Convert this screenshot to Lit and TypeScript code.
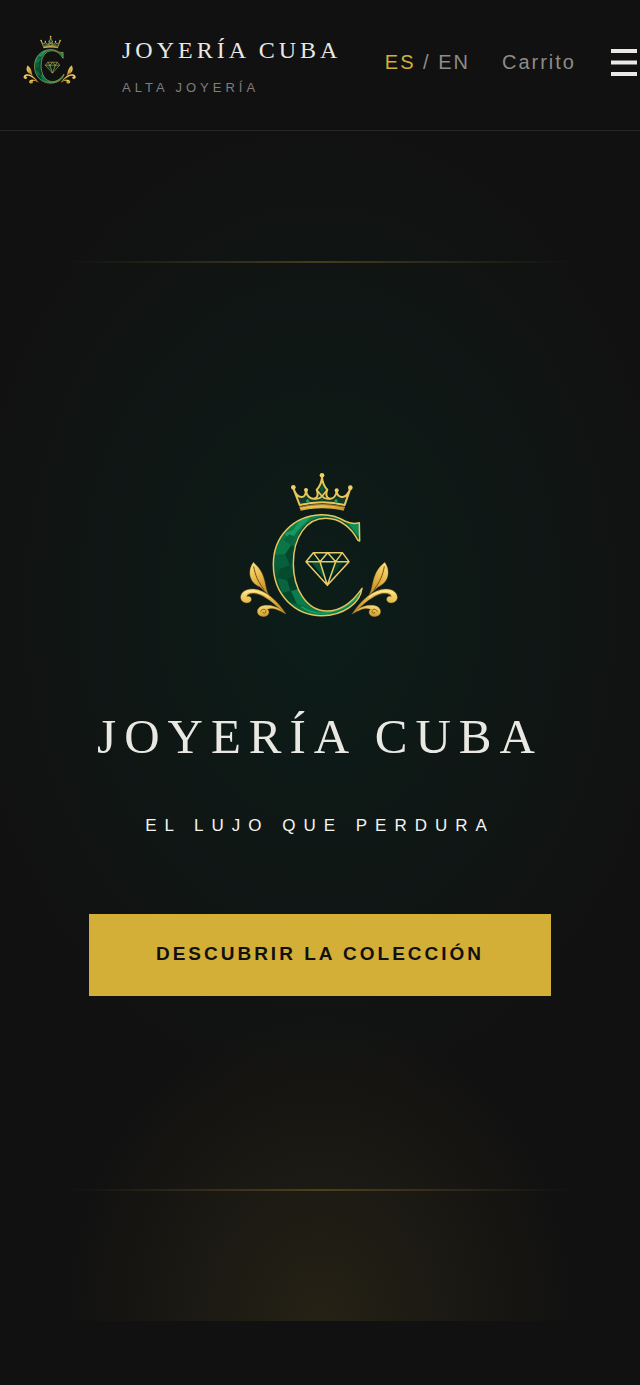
import { LitElement, html, css, svg } from "lit";
import { customElement } from "lit/decorators.js";

const CRESCENT =
  "M388 173 C374 177 358 175 344 168 C322 154 298 148 272 149 C190 152 130 215 130 298 C130 390 195 452 275 452 C340 452 390 415 396 370 C370 408 335 438 290 438 C228 436 190 370 190 296 C190 215 230 160 287 160 C330 160 365 188 383 225 L389 228 Z";

@customElement("brand-emblem")
class BrandEmblem extends LitElement {
  static styles = css`
    :host {
      display: block;
    }
    .emblem {
      display: block;
      width: 100%;
      height: auto;
    }
  `;

  private flourish() {
    return svg`
      <path d="M70 292 C52 316 56 352 90 366 L117 390 C102 368 112 326 70 292 Z"
        fill="url(#gold)" stroke="#9a6a1e" stroke-width="1"/>
      <path d="M71 304 C76 332 84 350 102 374" fill="none" stroke="#7a4d12" stroke-width="3"/>
      <path d="M168 447 C140 405 104 372 66 372 C44 372 31 385 32 399 C34 414 56 419 63 407 C67 398 58 391 50 395 C52 384 72 381 90 389 C118 401 140 424 168 447 Z"
        fill="url(#gold)" stroke="#9a6a1e" stroke-width="1"/>
      <path d="M42 386 C56 374 90 376 118 397" fill="none" stroke="#fff0a0" stroke-width="3"/>
      <path d="M52 390 C66 382 84 386 104 396" fill="none" stroke="#7a4d12" stroke-width="2"/>
      <path d="M166 446 C146 424 124 420 104 421 C88 423 79 434 83 445 C88 458 111 458 116 446 C118 440 116 436 112 433 C122 430 130 430 138 433 C148 437 157 441 166 446 Z"
        fill="url(#gold)" stroke="#9a6a1e" stroke-width="1"/>
      <path d="M92 440 C94 431 108 430 108 439 C108 446 99 446 99 441" fill="none" stroke="#7a4d12" stroke-width="2.5"/>`;
  }

  render() {
    return html`
      <svg class="emblem" viewBox="0 0 540 480" aria-hidden="true">
        <defs>
          <linearGradient id="gold" x1="0" y1="0" x2="0.4" y2="1">
            <stop offset="0" stop-color="#fbe68a" />
            <stop offset="0.5" stop-color="#e8bd4c" />
            <stop offset="1" stop-color="#c8922c" />
          </linearGradient>
          <linearGradient id="green" x1="0" y1="0" x2="0.35" y2="1">
            <stop offset="0" stop-color="#129459" />
            <stop offset="0.35" stop-color="#08663e" />
            <stop offset="0.7" stop-color="#05482c" />
            <stop offset="1" stop-color="#0a7d4b" />
          </linearGradient>
          <clipPath id="crescent"><path d=${CRESCENT} /></clipPath>
        </defs>

        <path d=${CRESCENT} fill="url(#green)" />
        <g clip-path="url(#crescent)">
          <path d="M164 205 L188 196 L210 166 L250 148 L200 200 L180 230 Z" fill="#20b073" opacity="0.6" />
          <path d="M130 245 L160 225 L184 240 L166 268 L136 270 Z" fill="#0b7648" />
          <path d="M160 225 L178 208 L196 215 L184 240 Z" fill="#086540" />
          <path d="M136 270 L166 268 L180 300 L150 312 L128 300 Z" fill="#085f3b" />
          <path d="M166 268 L184 240 L200 250 L190 300 L180 300 Z" fill="#04462b" />
          <path d="M150 312 L180 300 L190 330 L172 346 L142 340 Z" fill="#054c2e" />
          <path d="M142 340 L172 346 L182 378 L156 384 Z" fill="#086540" />
          <path d="M172 346 L190 330 L212 384 L182 378 Z" fill="#043f28" />
          <path d="M182 378 L206 372 L236 426 L200 416 Z" fill="#0a7b4b" />
          <path d="M156 384 L182 378 L200 416 L178 412 Z" fill="#04482c" />
          <path d="M196 240 C204 190 240 156 290 154 L350 172 L340 190 L290 164 L220 200 Z" fill="#043b26" opacity="0.7" />
          <path d="M215 425 C260 458 330 450 385 394" fill="none" stroke="#17a566" stroke-width="4" />
          <path d="M356 176 L388 176 L386 216 Z" fill="#0f8f58" />
        </g>
        <path d=${CRESCENT} fill="none" stroke="#e6c45e" stroke-width="4.5" stroke-linejoin="round" />

        <path d="M250 263 H337 L357 290 L292 361 L228 290 Z" fill="#04211a" />
        <path d="M244 292 H270 L286 344 Z" fill="#075237" />
        <path d="M317 292 H340 L302 336 Z" fill="#053a28" />
        <path
          d="M250 263 H337 L357 290 L292 361 L228 290 Z M228 290 H357 M250 263 L270 290 L293 263 L317 290 L337 263 M270 290 L292 361 L317 290"
          fill="none"
          stroke="#e9c96a"
          stroke-width="4.5"
          stroke-linejoin="round"
        />

        <path
          d="M190 70 L209 120 Q277 104 344 120 L361 71 C353 90 343 98 334 96 C324 94 321 88 320 78 C318 92 310 102 300 101 C289 99 286 88 292 74 C283 66 278 54 276 38 C274 54 269 66 260 74 C266 88 263 99 252 101 C240 102 230 92 228 78 C227 88 224 95 216 96 C207 97 197 88 190 70 Z"
          fill="#123a28"
          stroke="#eac659"
          stroke-width="6"
          stroke-linejoin="round"
        />
        <path
          d="M260 74 L276 94 L292 74 M252 101 Q266 104 276 94 Q286 104 300 101"
          fill="none"
          stroke="#eac659"
          stroke-width="5"
          stroke-linejoin="round"
        />
        <path d="M276 60 L282 72 L276 82 L270 72 Z M276 98 L281 104 L276 110 L271 104 Z" fill="#0a5c3c" />
        <path d="M233 101 L239 108 L233 114 L227 108 Z M318 101 L324 108 L318 114 L312 108 Z" fill="#16a268" />
        <path d="M208 125 Q277 109 345 125 L341 137 Q277 123 212 137 Z" fill="url(#gold)" />
        <path d="M211 126 Q277 112 342 126" fill="none" stroke="#5c3c0c" stroke-width="2" />
        <g fill="#f0cf68">
          <circle cx="190" cy="67" r="7" />
          <circle cx="228" cy="75" r="6" />
          <circle cx="276" cy="31" r="7" />
          <circle cx="320" cy="76" r="6" />
          <circle cx="361" cy="68" r="7" />
        </g>

        <g>${this.flourish()}</g>
        <g transform="translate(534 0) scale(-1 1)">${this.flourish()}</g>
      </svg>
    `;
  }
}

@customElement("app-root")
class AppRoot extends LitElement {
  static styles = css`
    :host {
      display: block;
      min-height: 100vh;
      background: #111111;
      color: #eae8e2;
      font-family: "Liberation Sans", Arial, sans-serif;
    }
    .header {
      display: flex;
      align-items: center;
      justify-content: space-between;
      height: 130px;
      padding-left: 20px;
      border-bottom: 1px solid #262626;
    }
    .brand {
      display: flex;
      align-items: center;
      gap: 42px;
      color: inherit;
      text-decoration: none;
    }
    .brand-mark {
      width: 60px;
      padding-bottom: 10px;
    }
    .brand-text {
      display: flex;
      flex-direction: column;
      gap: 10px;
      padding-top: 4px;
      white-space: nowrap;
    }
    .brand-name {
      font: 24px/32px "Liberation Serif", "Times New Roman", serif;
      letter-spacing: 4px;
    }
    .brand-sub {
      font-size: 13px;
      line-height: 24px;
      letter-spacing: 4px;
      color: #807e7b;
    }
    .nav {
      display: flex;
      align-items: center;
      gap: 32px;
      padding-bottom: 6px;
      font-size: 20px;
      line-height: 24px;
      letter-spacing: 2px;
      color: #8e8c89;
      white-space: nowrap;
    }
    .link {
      color: inherit;
      text-decoration: none;
    }
    .active {
      color: #d4af37;
    }
    .menu {
      display: block;
      padding: 0 3px;
      border: 0;
      background: none;
      color: #eae8e2;
      cursor: pointer;
    }
    .menu-icon {
      display: block;
    }
    .hero {
      display: flex;
      flex-direction: column;
      padding: 130px 64px;
      background:
        radial-gradient(ellipse 40% 26% at 50% 100%, rgba(212, 175, 55, 0.1), transparent),
        radial-gradient(ellipse 56% 41% at 50% 40%, rgba(6, 44, 34, 0.46), transparent);
    }
    .rule {
      width: 100%;
      height: 2px;
      margin: 0;
      border: 0;
      background: linear-gradient(90deg, transparent, rgba(212, 175, 55, 0.26), transparent);
    }
    .content {
      display: flex;
      flex-direction: column;
      align-items: center;
      padding: 202px 0 193px;
      text-align: center;
      white-space: nowrap;
    }
    .hero-mark {
      width: 180px;
    }
    .title {
      margin: 80px 0 0;
      font: 49px/64px "Liberation Serif", "Times New Roman", serif;
      letter-spacing: 8px;
    }
    .tagline {
      margin: 40px 0 0;
      font-size: 17px;
      line-height: 34px;
      letter-spacing: 8px;
      color: #f5f5f0;
    }
    .cta {
      margin-top: 71px;
      padding: 28px 67px 30px;
      background: #d4af37;
      color: #111111;
      font-size: 19px;
      font-weight: 700;
      line-height: 24px;
      letter-spacing: 3px;
      text-decoration: none;
    }
  `;

  render() {
    return html`
      <header class="header">
        <a class="brand" href="#">
          <brand-emblem class="brand-mark"></brand-emblem>
          <span class="brand-text">
            <span class="brand-name">JOYERÍA CUBA</span>
            <span class="brand-sub">ALTA JOYERÍA</span>
          </span>
        </a>
        <nav class="nav">
          <span><a class="link active" href="#es">ES</a> / <a class="link" href="#en">EN</a></span>
          <a class="link" href="#carrito">Carrito</a>
          <button class="menu" type="button" aria-label="Menú">
            <svg class="menu-icon" width="26" height="27" viewBox="0 0 26 27" fill="currentColor">
              <path d="M0 0H26V4H0Z M0 11.5H26V15.5H0Z M0 23H26V27H0Z" />
            </svg>
          </button>
        </nav>
      </header>
      <main class="hero">
        <hr class="rule" />
        <section class="content">
          <brand-emblem class="hero-mark"></brand-emblem>
          <h1 class="title">JOYERÍA CUBA</h1>
          <p class="tagline">EL LUJO QUE PERDURA</p>
          <a class="cta" href="#coleccion">DESCUBRIR LA COLECCIÓN</a>
        </section>
        <hr class="rule" />
      </main>
    `;
  }
}
